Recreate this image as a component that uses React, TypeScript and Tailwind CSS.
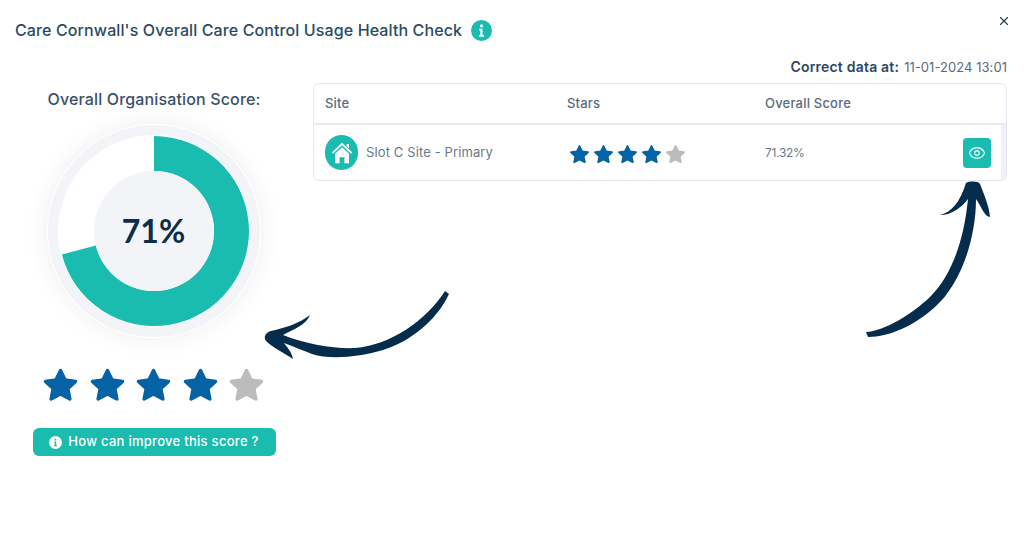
import { Eye, X } from 'lucide-react';

const FONT = "font-['Inter','Liberation_Sans',sans-serif]";

function Star({ filled, className }: { filled: boolean; className: string }) {
  const color = filled ? '#0563a5' : '#bcbcbc';
  return (
    <svg className={className} viewBox="0 0 24 24" fill={color} stroke={color} strokeWidth={2} strokeLinejoin="round">
      <path d="M12 3.2l2.7 5.6 6.1.8-4.5 4.2 1.2 6.1L12 17l-5.5 2.9 1.2-6.1-4.5-4.2 6.1-.8z" />
    </svg>
  );
}

function Stars({ size, gap }: { size: string; gap: string }) {
  return (
    <div className={`flex items-center ${gap}`}>
      {[1, 2, 3, 4, 5].map((n) => (
        <Star key={n} filled={n <= 4} className={size} />
      ))}
    </div>
  );
}

function InfoDot({ className, bg, fg }: { className: string; bg: string; fg: string }) {
  return (
    <svg className={className} viewBox="0 0 20 20">
      <circle cx="10" cy="10" r="10" fill={bg} />
      <circle cx="10" cy="5.6" r="1.5" fill={fg} />
      <path d="M7.8 8.4h3.2v6h1.3v1.5H7.6v-1.5h1.3v-4.5H7.8z" fill={fg} />
    </svg>
  );
}

function HouseIcon() {
  return (
    <svg className="w-[24px] h-[24px]" viewBox="0 0 24 24" fill="#ffffff">
      <path d="M1.8 11.6L12 1.8l10.2 9.8-1.2 1.2L12 4.2 3 12.8z" />
      <path d="M16.6 3h2.4v4.6l-2.4-2.3z" />
      <path d="M12 6.2l7 6.6v9.4h-4.6v-6h-4.8v6H5v-9.4z" />
    </svg>
  );
}

// 71% ring, starts at 12 o'clock and runs clockwise
function Donut() {
  return (
    <div className="relative w-[214px] h-[214px] rounded-full shadow-[0_0_24px_rgba(15,30,60,0.07)]">
      <svg className="w-full h-full" viewBox="0 0 214 214">
        <circle cx="107" cy="107" r="107" fill="#ffffff" />
        <circle cx="107" cy="107" r="106" fill="#f3f4f7" />
        <circle cx="107" cy="107" r="96" fill="#ffffff" />
        <path
          d="M107 12A95 95 0 1 1 14.9 130.4L48.8 121.6A60 60 0 1 0 107 47Z"
          fill="#1abcb0"
        />
        <circle cx="107" cy="107" r="60" fill="#f3f4f7" />
      </svg>
      <div className="absolute inset-0 flex items-center justify-center text-[32px] font-bold text-[#0f2c48] font-['Lato',sans-serif]">
        71%
      </div>
    </div>
  );
}

function Arrows() {
  return (
    <svg className="absolute inset-0 w-[1024px] h-[538px] pointer-events-none" viewBox="0 0 1024 538" fill="#052c4a">
      <path d="M310 315C306 325 294 329 283 335C305 344 335 349 355 348C390 345 425 322 445 291L449 294C437 320 410 342 383 350C360 357 330 360 312 354C304 351 295 347 284 343C288 348 292 353 293 359C284 353 272 347 266 341C263 337 266 332 271 331C285 328 300 323 310 315Z" />
      <path d="M940 215C952 212 960 202 966 183C970 181 978 181 980 184C984 195 989 205 990 217C985 217 982 208 976 199C976 240 960 285 935 307C915 325 890 337 868 337L866 332C885 331 912 314 930 297C952 275 964 240 968 199C962 207 952 215 940 215Z" />
    </svg>
  );
}

export default function App() {
  return (
    <div className={`relative w-[1024px] h-[538px] bg-white overflow-hidden ${FONT}`}>
      <div className="flex items-start justify-between pl-[15px] pr-[13px] pt-[14px] pb-[10px]">
        <div className="flex items-center gap-[9px] mt-[5px]">
          <h1 className="text-[16px] leading-[22px] font-medium tracking-[0.11px] text-[#2b4a63] whitespace-nowrap">
            Care Cornwall's Overall Care Control Usage Health Check
          </h1>
          <InfoDot className="w-[21px] h-[21px]" bg="#1abcb0" fg="#ffffff" />
        </div>
        <X className="w-[14px] h-[14px] text-[#2b3d4f]" strokeWidth={2} />
      </div>

      <div className="flex">
        <div className="w-[307px] mr-[1px] flex flex-col items-center pt-[38px]">
          <div className="ml-[1px] text-[16px] leading-[20px] font-medium tracking-[0.15px] text-[#3a5068] whitespace-nowrap">
            Overall Organisation Score:
          </div>
          <div className="mt-[15px]">
            <Donut />
          </div>
          <div className="mt-[27px]">
            <Stars size="w-[41px] h-[41px]" gap="gap-[5.5px]" />
          </div>
          <button className="mt-[22px] ml-[1px] w-[243px] h-[28px] rounded-[6px] bg-[#1abcb0] flex items-center justify-center gap-[6px] text-white text-[13px] tracking-[0.28px] font-medium">
            <InfoDot className="w-[13px] h-[13px]" bg="#ffffff" fg="#1abcb0" />
            How can improve this score ?
          </button>
        </div>

        <div className="ml-[5px] w-[694px] pt-[7px]">
          <div className="h-[18px] flex items-baseline justify-end text-[13px] leading-[18px] tracking-[0.05px] text-[#5a6b7b] whitespace-nowrap">
            <span className="text-[14px] tracking-[0.2px] font-semibold text-[#2b4a63] mr-[5px]">Correct data at:</span>
            11-01-2024 13:01
          </div>
          <div className="mt-[7px] h-[98px] border border-[#e4e6ef] rounded-[6px] flex flex-col">
            <div className="h-[41px] shrink-0 border-b-2 border-[#e8eaf1] flex items-center pl-[11px] text-[13px] tracking-[0.2px] font-medium text-[#5a6b7b]">
              <div className="w-[242px]">Site</div>
              <div className="w-[198px]">Stars</div>
              <div>Overall Score</div>
            </div>
            <div className="flex-1 flex items-center pl-[11px] relative">
              <div className="w-[242px] flex items-center gap-[8px]">
                <div className="w-[33px] h-[35px] rounded-full bg-[#1abcb0] flex items-center justify-center">
                  <HouseIcon />
                </div>
                <span className="text-[13px] tracking-[0.12px] text-[#6b7a88] whitespace-nowrap">Slot C Site - Primary</span>
              </div>
              <div className="w-[198px] pt-[4px] pl-[1px]">
                <Stars size="w-[23px] h-[23px]" gap="gap-[1px]" />
              </div>
              <div className="text-[12px] tracking-[-0.3px] text-[#6b7a88]">71.32%</div>
              <div className="ml-auto mr-[15px] w-[28px] h-[30px] rounded-[4px] bg-[#1abcb0] flex items-center justify-center">
                <Eye className="w-[18px] h-[18px] text-[#d5f5f1]" strokeWidth={1.75} />
              </div>
              <div className="absolute right-0 top-0 bottom-0 w-[5px] bg-[#f0f1f5]" />
            </div>
          </div>
        </div>
      </div>

      <Arrows />
    </div>
  );
}
